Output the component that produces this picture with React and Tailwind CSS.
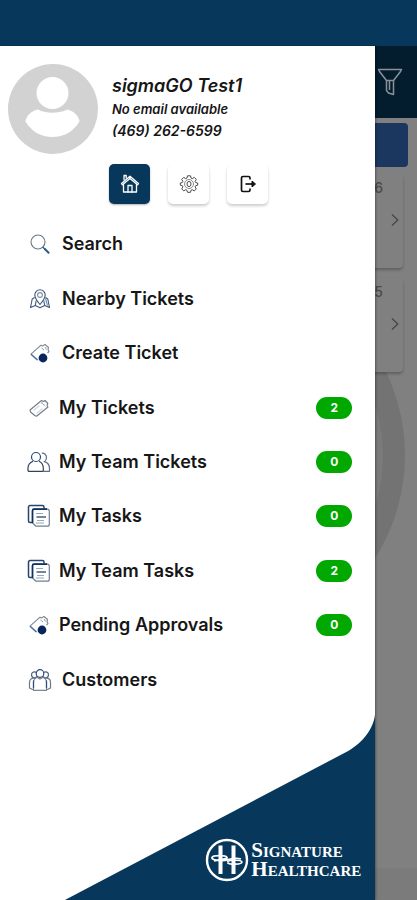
import React from "react";

/**ICONS */
const SearchIcon = () => (
    <svg className="w-6 h-6" viewBox="0 0 24 24" fill="none" strokeLinecap="round">
        <circle cx="10" cy="10" r="7" stroke="#6b7785" strokeWidth="1.1" />
        <path d="M15 15.2L16.8 17" stroke="#2c5c85" strokeWidth="1.4" />
        <path d="M16.8 17L20.6 20.8" stroke="#2c5c85" strokeWidth="2" />
    </svg>
);

const NearbyIcon = () => (
    <svg className="w-6 h-6" viewBox="0 0 24 24" fill="none" stroke="#3f5878" strokeWidth="1.1" strokeLinejoin="round">
        <path d="M12 17.5C9 14 6.8 11 6.8 8a5.2 5.2 0 0 1 10.4 0c0 3-2.2 6-5.2 9.5z" />
        <circle cx="12" cy="8" r="2.4" stroke="#7f8fa3" />
        <path d="M6.6 10.5L4.2 12L2.5 20.5L7.3 18.6L12 20.7L16.7 18.6L21.5 20.5L19.8 12L17.4 10.5" />
        <path d="M7.3 18.6L8.2 13.5M16.7 18.6L15.8 13.5" />
        <path d="M17.5 11.5L19.5 18.5" stroke="#5c93c4" />
    </svg>
);

const TicketIcon = () => (
    <svg className="w-6 h-6" viewBox="0 0 24 24" fill="none" stroke="#6f7b88" strokeWidth="1.1" strokeLinejoin="round">
        <path d="M3 14L14.5 4.5L16.5 5.5L18 4.5L20.8 7.5L20 9.5L21 11L9.5 20.3L7.8 19.5L3.5 16z" />
        <path d="M14.5 6.5L18.5 10.5" strokeDasharray="1.5 1.2" />
        <path d="M6.5 14.5L12.5 9.5M9.5 17.5L15.5 12.5" stroke="#d3d8dd" />
    </svg>
);

const TicketDotIcon = () => (
    <svg className="w-6 h-6" viewBox="0 0 24 24" fill="none" strokeLinejoin="round">
        <path d="M9.5 19L3 13.2L13 4.2L14.5 5L17 3.5L20.5 6.5L20 8.5L21 10.5L19.5 12" stroke="#7d8894" strokeWidth="1.1" />
        <path d="M13.5 7L16 9M17 6L18.5 8.5" stroke="#8c97a3" />
        <path d="M3 13.2L9.5 19" stroke="#4a74a0" strokeWidth="1.2" />
        <circle cx="15" cy="17" r="4.4" fill="#08265c" />
    </svg>
);

const TeamIcon = () => (
    <svg className="w-6 h-6" viewBox="0 0 24 24" fill="none" strokeLinejoin="round" strokeWidth="1.2">
        <path d="M14.8 3.2a4.2 4.2 0 0 1 4.7 4.3c0 2-1 3.5-2.3 4.2c3.3.8 5.3 3.3 5.3 6.8v2.8H17" stroke="#5d6d84" />
        <circle cx="9" cy="7" r="4.5" stroke="#2a4a80" />
        <path d="M1 21.3v-3.3C1 15 2.8 12.7 6 11.3M12 11.3C15 12.7 16.3 15 16.3 18v3.3H1" stroke="#34425c" />
    </svg>
);

const TasksIcon = () => (
    <svg className="w-6 h-6" viewBox="0 0 24 24" fill="none" strokeLinejoin="round">
        <path d="M5 18.5H3a1.5 1.5 0 0 1-1.5-1.5V3A1.5 1.5 0 0 1 3 1.5h12.5A1.5 1.5 0 0 1 17 3v1.5" stroke="#24456f" strokeWidth="1.5" />
        <path d="M7 5.2h13.5A1.8 1.8 0 0 1 22.3 7v13.2a2 2 0 0 1-2 2H9L5.5 19V6.7A1.5 1.5 0 0 1 7 5.2z" fill="#fff" stroke="#6f8094" strokeWidth="1.2" />
        <path d="M20 5.2H7A1.5 1.5 0 0 0 5.5 6.7V19" stroke="#10305e" strokeWidth="1.7" />
        <path d="M9 9.5h7M10 16.5h7M9 19h8" stroke="#9aa6b4" />
        <path d="M9.5 13h9.5" stroke="#24456f" strokeWidth="1.3" />
    </svg>
);

const CustomersIcon = () => (
    <svg className="w-6 h-6" viewBox="0 0 24 24" fill="#fff" strokeLinejoin="round" strokeWidth="1.2">
        <circle cx="6.5" cy="6.8" r="3" stroke="#52647f" />
        <circle cx="17.5" cy="6.8" r="3" stroke="#52647f" />
        <path d="M1.5 20v-5.5c0-2.5 1.8-4.3 4.3-4.3H18.2c2.5 0 4.3 1.8 4.3 4.3V20l-3 1.5h-15z" stroke="#6b7889" />
        <circle cx="12" cy="5.5" r="3.8" stroke="#2f4c7c" />
        <path d="M5.5 22.3v-8C5.5 11.5 7.5 10 9.5 9.5L12 11L14.5 9.5c2 .5 4 2 4 4.8v8z" stroke="#7a8695" />
        <path d="M18.5 12.5V20M5.5 12.5V20" stroke="#2f4c7c" />
    </svg>
);

const HomeIcon = () => (
    <svg className="w-5 h-5" viewBox="0 0 20 20" fill="none" stroke="#fff" strokeWidth="1.3" strokeLinejoin="round" strokeLinecap="round">
        <path d="M1.5 9.5L10 2.2L18.5 9.5L17.5 10.8L10 4.6L2.5 10.8z" />
        <path d="M4 5.8V1.5H6.2V4M3.5 10.5V18H16.5V10.5" />
        <path d="M8 18V11.5H12V18" />
    </svg>
);

const GearIcon = () => (
    <svg className="w-5 h-5" viewBox="0 0 20 20" fill="none" stroke="#4b4b4b" strokeLinejoin="round">
        <path d="M8.5 1.8h3l.5 2.2l1.3.6l2-1.2l2 2l-1.2 2l.6 1.2l2 .4v2.2l-2 .5l-.6 1.2l1.2 2l-2 2l-2-1.2l-1.3.6l-.5 2h-3l-.5-2l-1.3-.6l-2 1.2l-2-2l1.2-2l-.6-1.2l-2-.5V9l2-.4l.6-1.2l-1.2-2l2-2l2 1.2L8 4z" />
        <circle cx="10" cy="10" r="4.5" stroke="#8a8a8a" />
        <ellipse cx="10" cy="10" rx="2" ry="2.6" />
    </svg>
);

const LogoutIcon = () => (
    <svg className="w-5 h-5" viewBox="0 0 20 20" fill="none" stroke="#111" strokeWidth="1.7" strokeLinejoin="round">
        <path d="M12 5.5V4A1.5 1.5 0 0 0 10.5 2.5H5A1.5 1.5 0 0 0 3.5 4v12A1.5 1.5 0 0 0 5 17.5h5.5A1.5 1.5 0 0 0 12 16v-1.5" />
        <path d="M7.5 10H16" />
        <path d="M14 7L17.5 10L14 13z" fill="#111" strokeWidth="1" />
    </svg>
);

const FilterIcon = () => (
    <svg className="w-[26px] h-[28px]" viewBox="0 0 26 28" fill="none" stroke="#8b9297" strokeWidth="1.5" strokeLinejoin="round">
        <path d="M1.5 1.5H24.5L23.5 3.5L16.5 12.5H9.5L2.5 3.5z" />
        <path d="M9.5 12.5V22.5L11.5 25L16.5 26.5V12.5M12.5 13V22" />
    </svg>
);

const ChevronIcon = () => (
    <svg className="w-2 h-3" viewBox="0 0 8 12" fill="none" stroke="#444" strokeWidth="1.2">
        <path d="M1 0.5L6.8 6L1 11.5" />
    </svg>
);

const Avatar = () => (
    <svg className="w-[90px] h-[90px] shrink-0" viewBox="0 0 90 90">
        <circle cx="45" cy="45" r="45" fill="#d2d2d2" />
        <circle cx="44.5" cy="29" r="16" fill="#fff" />
        <path d="M30 45.5C22 47 18 53 17.5 57.5C24 68 33 73 44.5 73S65 68 71.5 57.5C71 53 67 47 59 45.5C52 49.7 37 49.7 30 45.5z" fill="#fff" />
    </svg>
);

const LogoMark = () => (
    <svg className="w-11 h-11 shrink-0" viewBox="0 0 44 44" fill="none" stroke="#fff">
        <circle cx="22" cy="22" r="20" strokeWidth="2.4" />
        <path d="M15.5 7.5V36M28.5 7.5V36" strokeWidth="4" />
        <path d="M36 21C28 18.5 24 22.5 17 22.5C11 22.5 6.5 21.5 7 19.5C8 17 21 17 22 19.5C22.5 21 15 21.5 9 23" strokeWidth="1.8" />
        <path d="M22 23.5C25 22 36 21.5 37 24C37 26.5 24 27 22.5 24.5" strokeWidth="1.6" />
    </svg>
);

const menu = [
    { label: "Search", icon: SearchIcon },
    { label: "Nearby Tickets", icon: NearbyIcon },
    { label: "Create Ticket", icon: TicketDotIcon },
    { label: "My Tickets", icon: TicketIcon, count: 2 },
    { label: "My Team Tickets", icon: TeamIcon, count: 0 },
    { label: "My Tasks", icon: TasksIcon, count: 0 },
    { label: "My Team Tasks", icon: TasksIcon, count: 2 },
    { label: "Pending Approvals", icon: TicketDotIcon, count: 0 },
    { label: "Customers", icon: CustomersIcon },
];

const MenuItem = ({ label, icon: Icon, count }) => {
    const hasCount = count !== undefined;

    return (
        <li className="flex">
            <a
                href="#"
                className={
                    hasCount
                        ? "flex flex-1 items-center gap-2 pl-[27px] pr-[23px]"
                        : "flex flex-1 items-center gap-[10px] pl-7 pr-[23px]"
                }
            >
                <Icon />
                <span className="flex-1 text-[18px] leading-6 font-semibold text-[#161616]">{label}</span>
                {hasCount && (
                    <span className="w-9 h-[22px] rounded-full bg-[#00a800] text-white text-[12px] leading-[22px] font-bold text-center">
                        {count}
                    </span>
                )}
            </a>
        </li>
    );
};

/**TICKET CARD BEHIND THE DRAWER */
const TicketCard = ({ digit }) => (
    <div className="h-[94px] flex flex-col items-end rounded-[4px] bg-[#808080] shadow-[0_2px_3px_rgba(0,0,0,0.25)]">
        <span className="pt-1 pr-5 text-[14px] leading-5 font-medium text-[#4a4a4a]">{digit}</span>
        <div className="pt-4 pr-1">
            <ChevronIcon />
        </div>
    </div>
);

const App = () => {
    return (
        <div className="min-h-screen flex flex-col bg-[#07385c] font-['Inter',sans-serif]">
            <div className="h-[46px]" />

            <div className="relative flex-1 flex flex-col">

                {/**DIMMED PAGE*/}
                <main className="relative flex-1 flex flex-col bg-[#808080] overflow-hidden">
                    <div className="absolute left-1/2 top-[217px] -ml-[188px] w-[384px] h-[384px] rounded-full border-[22px] border-[#737373] bg-[#7a7a7a]" />
                    <header className="relative h-[72px] flex justify-end bg-[#031c2e] pt-[22px] pr-[14px]">
                        <button type="button" aria-label="Filter" className="self-start">
                            <FilterIcon />
                        </button>
                    </header>
                    <div className="relative flex flex-col pt-[5px] pl-2 pr-[9px]">
                        <div className="h-[44px] rounded-[4px] bg-[#1b375f]" />
                    </div>
                    <div className="relative flex flex-col gap-[10px] pt-[7px] pl-2 pr-[14px]">
                        <TicketCard digit="6" />
                        <TicketCard digit="5" />
                    </div>
                    <div className="mt-auto h-8 bg-[#7b7b7b]" />
                </main>

                {/**DRAWER*/}
                <aside className="absolute inset-y-0 left-0 w-[90%] flex flex-col bg-white shadow-[1px_0_2px_rgba(0,0,0,0.35)]">
                    <div className="flex items-start gap-[14px] pl-2 pt-[18px]">
                        <Avatar />
                        <div className="flex flex-col pt-[10px] italic text-[#161616]">
                            <p className="text-[18px] leading-6 font-semibold">sigmaGO Test1</p>
                            <p className="text-[13px] leading-[22px] font-semibold">No email available</p>
                            <p className="text-[14px] leading-[22px] font-semibold">(469) 262-6599</p>
                        </div>
                    </div>

                    <div className="flex gap-[18px] pl-[109px] pt-[10px]">
                        <button type="button" aria-label="Home" className="w-[41px] h-10 flex items-center justify-center rounded-[5px] bg-[#07385c] shadow-[0_1px_2px_rgba(0,0,0,0.3)]">
                            <HomeIcon />
                        </button>
                        <button type="button" aria-label="Settings" className="w-[41px] h-10 flex items-center justify-center rounded-[5px] bg-white shadow-[0_2px_3px_rgba(0,0,0,0.2)]">
                            <GearIcon />
                        </button>
                        <button type="button" aria-label="Log out" className="w-[41px] h-10 flex items-center justify-center rounded-[5px] bg-white shadow-[0_2px_3px_rgba(0,0,0,0.2)]">
                            <LogoutIcon />
                        </button>
                    </div>

                    <nav className="pt-[13px]">
                        <ul className="grid auto-rows-fr min-h-[490px]">
                            {menu.map((item) => (
                                <MenuItem key={item.label} {...item} />
                            ))}
                        </ul>
                    </nav>

                    <footer className="relative mt-auto h-[190px] flex items-end justify-end pb-[18px] pr-[14px]">
                        <svg className="absolute inset-0 w-full h-full" viewBox="0 0 376 190" preserveAspectRatio="none">
                            <path d="M376 0V190H65L345 43C363 34 376 18 376 0z" fill="#07385c" />
                        </svg>
                        <div className="relative flex items-center gap-[2px] text-white">
                            <LogoMark />
                            <p className="font-['Liberation_Serif',serif] text-[21px] leading-[19px] font-bold [font-variant:small-caps]">
                                Signature
                                <br />
                                Healthcare
                            </p>
                        </div>
                    </footer>
                </aside>
            </div>
        </div>
    );
};

export default App;
